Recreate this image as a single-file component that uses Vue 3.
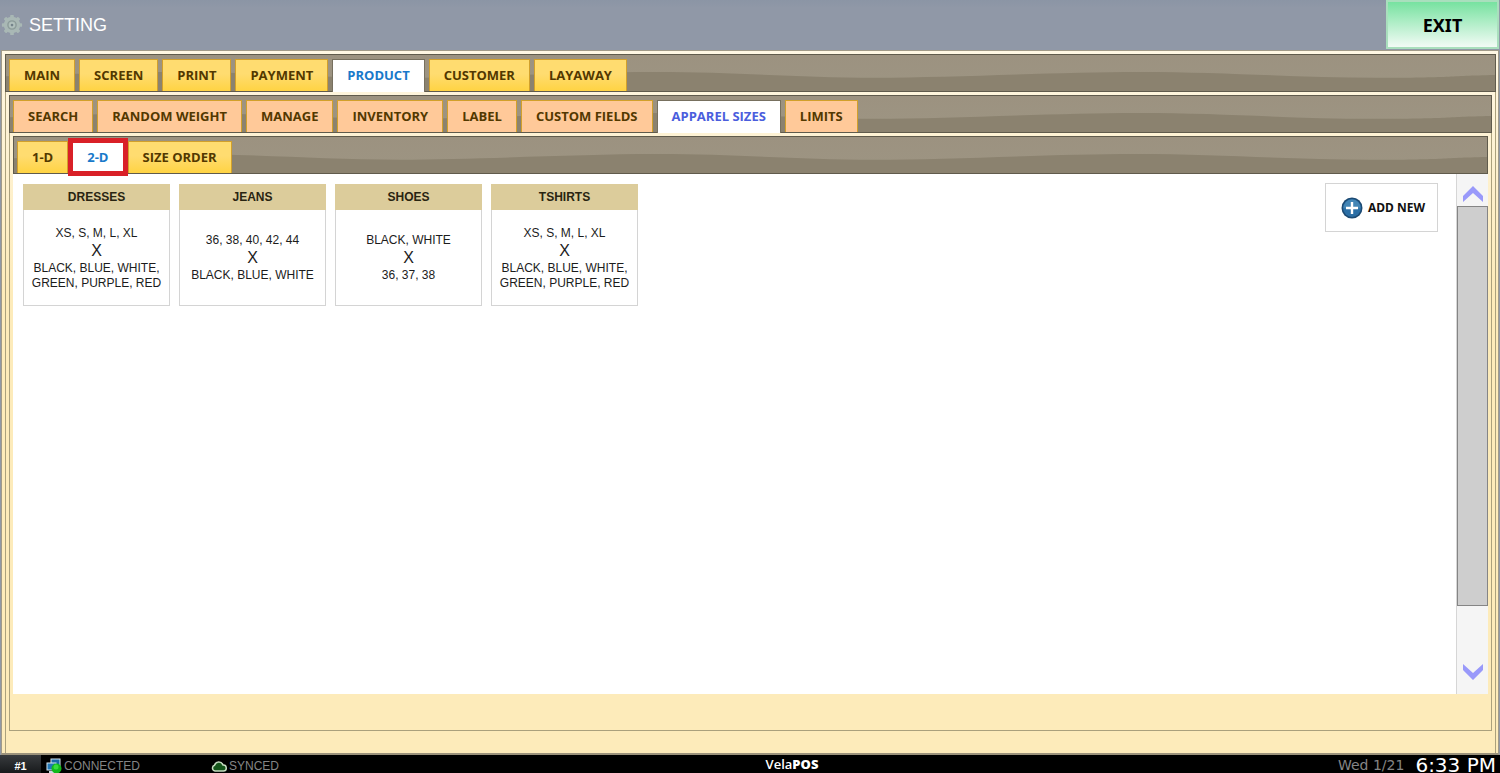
<script setup>
import { ref } from 'vue'

const mainTabs = ['MAIN', 'SCREEN', 'PRINT', 'PAYMENT', 'PRODUCT', 'CUSTOMER', 'LAYAWAY']
const productTabs = ['SEARCH', 'RANDOM WEIGHT', 'MANAGE', 'INVENTORY', 'LABEL', 'CUSTOM FIELDS', 'APPAREL SIZES', 'LIMITS']
const sizeTabs = ['1-D', '2-D', 'SIZE ORDER']

const activeMain = ref('PRODUCT')
const activeProduct = ref('APPAREL SIZES')
const activeSize = ref('2-D')

const cards = [
  { title: 'DRESSES', first: 'XS, S, M, L, XL', second: 'BLACK, BLUE, WHITE, GREEN, PURPLE, RED' },
  { title: 'JEANS', first: '36, 38, 40, 42, 44', second: 'BLACK, BLUE, WHITE' },
  { title: 'SHOES', first: 'BLACK, WHITE', second: '36, 37, 38' },
  { title: 'TSHIRTS', first: 'XS, S, M, L, XL', second: 'BLACK, BLUE, WHITE, GREEN, PURPLE, RED' },
]
const wave = 'M-90 24C0 24 80 18 165 18S310 24 390 24S570 18 650 18S790 24 870 24S1050 18 1135 18S1290 24 1370 24S1440 22 1490 21V40H-90Z'
</script>

<template>
  <div class="app">
    <header class="header">
      <svg class="gear" viewBox="0 0 24 24" aria-hidden="true">
        <g fill="#a9b8b5">
          <rect v-for="n in 4" :key="n" x="10" y="1" width="4" height="22" rx="1" :transform="`rotate(${n * 45} 12 12)`" />
          <circle cx="12" cy="12" r="9" />
        </g>
        <circle cx="12" cy="12" r="4.5" fill="none" stroke="#8c9b99" stroke-width="1.5" />
        <circle cx="12" cy="12" r="3" fill="#b4c2be" />
        <circle cx="12" cy="12" r="1.5" fill="#74838a" />
      </svg>
      <h1 class="title">SETTING</h1>
      <button type="button" class="exit">EXIT</button>
    </header>

    <main class="frame">
      <section class="panel panel-main">
        <nav class="bar">
          <svg class="wave" viewBox="0 0 1490 38" preserveAspectRatio="none" aria-hidden="true"><path :d="wave" /></svg>
          <button v-for="t in mainTabs" :key="t" type="button" class="tab" :class="{ active: t === activeMain }" @click="activeMain = t">{{ t }}</button>
        </nav>
        <section class="panel panel-product">
          <nav class="bar">
            <svg class="wave" viewBox="0 0 1490 38" preserveAspectRatio="none" aria-hidden="true"><path :d="wave" /></svg>
            <button v-for="t in productTabs" :key="t" type="button" class="tab peach" :class="{ active: t === activeProduct }" @click="activeProduct = t">{{ t }}</button>
          </nav>
          <section class="sizes">
            <nav class="bar">
              <svg class="wave" viewBox="0 0 1490 38" preserveAspectRatio="none" aria-hidden="true"><path :d="wave" /></svg>
              <button v-for="t in sizeTabs" :key="t" type="button" class="tab" :class="{ active: t === activeSize, marked: t === '2-D' }" @click="activeSize = t">{{ t }}</button>
            </nav>
            <div class="body">
              <div class="content">
                <div class="cards">
                  <article v-for="c in cards" :key="c.title" class="card">
                    <h2 class="card-title">{{ c.title }}</h2>
                    <div class="card-body">
                      <p>{{ c.first }}</p>
                      <p class="cross">X</p>
                      <p>{{ c.second }}</p>
                    </div>
                  </article>
                </div>
                <button type="button" class="add">
                  <svg class="plus" viewBox="0 0 22 22" aria-hidden="true">
                    <circle cx="11" cy="11" r="10.5" fill="#1c4a73" />
                    <circle cx="11" cy="11" r="9" fill="#2b6ea5" />
                    <path d="M2.5 11a8.5 8.5 0 0 1 17 0q-8 3-17 0" fill="#4385b5" />
                    <path d="M11 5v12M5 11h12" stroke="#fff" stroke-width="2.4" />
                  </svg>
                  <span>ADD NEW</span>
                </button>
              </div>
              <div class="scroll">
                <button type="button" class="arrow" aria-label="Scroll up">
                  <svg viewBox="0 0 20 16" aria-hidden="true"><path d="M0 16V10L10 0l10 10v6L10 7Z" /></svg>
                </button>
                <div class="track"><div class="thumb"></div></div>
                <button type="button" class="arrow down" aria-label="Scroll down">
                  <svg viewBox="0 0 20 16" aria-hidden="true"><path d="M0 0v6l10 10L20 6V0L10 9Z" /></svg>
                </button>
              </div>
            </div>
          </section>
        </section>
      </section>
    </main>

    <footer class="status">
      <span class="station">#1</span>
      <span class="state connected">
        <svg class="icon" viewBox="0 0 16 16" aria-hidden="true">
          <rect x="5" y="1" width="9" height="7" fill="#1768a8" stroke="#d5e6ef" />
          <rect x="1" y="5" width="9" height="7" fill="#2277b5" stroke="#d5e6ef" />
          <path d="M3 14h6" stroke="#c9d8e0" stroke-width="2" />
          <circle cx="10.5" cy="10.5" r="5" fill="#12b91c" />
          <circle cx="10" cy="9" r="2.5" fill="#38dd3d" />
        </svg>
        CONNECTED
      </span>
      <span class="state synced">
        <svg class="icon" viewBox="0 0 16 16" aria-hidden="true">
          <path d="M4 13a3 3 0 0 1-.5-5.800A4.500 4.500 0 0 1 12 7a3 3 0 0 1 .5 6Z" fill="#14551a" stroke="#c5dcc0" stroke-width="1.500" />
        </svg>
        SYNCED
      </span>
      <span class="brand">Vela<b>POS</b></span>
      <span class="date">Wed 1/21</span>
      <span class="clock">6:33 PM</span>
    </footer>
  </div>
</template>

<style>
body {
  margin: 0;
}
</style>

<style scoped>
* {
  box-sizing: border-box;
}
.app {
  display: flex;
  flex-direction: column;
  height: 100vh;
  overflow: hidden;
  background: #9098a6;
  color: #1c1c1c;
  font-family: "Liberation Sans", Arial, sans-serif;
}
button {
  margin: 0;
  cursor: pointer;
}
.header {
  display: flex;
  align-items: center;
  height: 50px;
  flex: none;
  padding: 0 1px;
  background: linear-gradient(#8b95a5, #9098a7 8px);
}
.gear {
  width: 22px;
  height: 22px;
  margin-right: 6px;
}
.title {
  flex: 1;
  margin: 0;
  color: #fff;
  font-size: 18px;
  font-weight: 400;
}
.exit {
  width: 113px;
  height: 49px;
  border: 2px solid #a9dfbd;
  background: linear-gradient(#77e2a0, #f2fbf5);
  color: #000;
  font: 700 18px "Noto Sans", sans-serif;
  align-self: flex-start;
}
.frame {
  display: flex;
  flex: 1;
  flex-direction: column;
  min-height: 0;
  margin: 0 1px;
  padding: 3px 2px 0 3px;
  border: 1px solid #a19a88;
  border-bottom: 2px solid #9b927c;
  background: linear-gradient(#fff7e3, #fdebba 240px);
}
.panel {
  display: flex;
  flex: 1;
  flex-direction: column;
  min-height: 0;
  border: 1px solid #aaa07c;
  border-top: 0;
}
.panel-main {
  border-bottom: 0;
  padding: 0 3px 22px;
}
.panel-product {
  padding: 0 3px 36px;
}
.bar {
  position: relative;
  display: flex;
  align-items: flex-end;
  gap: 4px;
  height: 38px;
  flex: none;
  margin: 0 -4px 3px;
  padding: 4px 3px 0;
  border: 1px solid #605b4c;
  background: linear-gradient(#9c9280, #9d9583);
}
.sizes .bar {
  margin: 0;
}
.wave {
  position: absolute;
  inset: 0;
  width: 100%;
  height: 100%;
  fill: #8b826f;
}
.tab {
  position: relative;
  height: 32px;
  padding: 0 14px 2px;
  border: 1px solid #d2a02b;
  border-bottom: 0;
  background: linear-gradient(#ffdc70 45%, #ffd343);
  color: #523800;
  font: 700 13px/20px "Open Sans", "Segoe UI", sans-serif;
  white-space: nowrap;
}
.peach {
  background: #ffc999;
}
.tab.active {
  height: 33px;
  margin-bottom: -1px;
  border-color: #77705f;
  background: #fff;
  color: #1979ca;
}
.peach.active {
  color: #4a5ddd;
}
.tab.marked {
  z-index: 1;
}
.tab.marked::after {
  content: "";
  position: absolute;
  inset: -4px -5px -2px;
  border: 5px solid #d92027;
}
.sizes {
  display: flex;
  flex: 1;
  flex-direction: column;
  min-height: 0;
}
.body {
  display: flex;
  flex: 1;
  min-height: 0;
  background: #fff;
}
.content {
  display: flex;
  flex: 1;
  align-items: flex-start;
  justify-content: space-between;
  padding: 9px 18px 0 10px;
}
.cards {
  display: flex;
  gap: 9px;
  padding-top: 1px;
}
.card {
  width: 147px;
  height: 122px;
  display: flex;
  flex-direction: column;
  border: 1px solid #d4d4d4;
}
.card-title {
  margin: -1px -1px 0;
  background: #dccc9b;
  color: #292411;
  font-size: 12px;
  line-height: 26px;
  text-align: center;
}
.card-body {
  display: flex;
  flex: 1;
  flex-direction: column;
  justify-content: center;
  padding: 1px 6px 0;
  text-align: center;
  font-size: 12px;
  line-height: 15px;
}
.card-body p {
  margin: 0;
}
.card-body .cross {
  font-size: 16px;
  line-height: 20px;
}
.add {
  display: flex;
  align-items: center;
  justify-content: center;
  gap: 5px;
  width: 113px;
  height: 49px;
  padding: 0 0 0 3px;
  border: 1px solid #d4d4d4;
  background: #fff;
  color: #111;
  font: 700 12px "Noto Sans", sans-serif;
}
.plus {
  width: 22px;
  height: 22px;
}
.scroll {
  display: flex;
  flex-direction: column;
  width: 32px;
  border-left: 1px solid #d6d6d6;
  background: #f5f5f5;
}
.arrow {
  display: flex;
  align-items: center;
  justify-content: center;
  height: 32px;
  padding: 8px 0 0;
  border: 0;
  background: none;
}
.arrow.down {
  height: 44px;
  padding: 0;
}
.arrow svg {
  width: 20px;
  height: 16px;
  fill: #9999fa;
}
.track {
  flex: 1;
}
.thumb {
  height: 90%;
  border: 1px solid #858585;
  background: #cecece;
}
.status {
  position: relative;
  display: flex;
  align-items: center;
  height: 18px;
  flex: none;
  background: #000;
  color: #858585;
  font-size: 12px;
  line-height: 18px;
}
.station {
  width: 41px;
  height: 18px;
  background: linear-gradient(#383b3e, #181a1c);
  color: #fff;
  font-size: 11px;
  font-weight: 700;
  line-height: 22px;
  text-align: center;
}
.state {
  display: flex;
  align-items: center;
  gap: 2px;
  padding-top: 4px;
}
.connected {
  width: 170px;
  padding-left: 5px;
}
.icon {
  width: 16px;
  height: 16px;
}
.brand {
  position: absolute;
  left: 0;
  right: 0;
  padding-left: 84px;
  color: #fff;
  font-family: "Open Sans", sans-serif;
  font-size: 13px;
  font-weight: 600;
  text-align: center;
}
.date,
.clock {
  font-family: "DejaVu Sans", sans-serif;
  line-height: 16px;
  padding-top: 2px;
}
.date {
  margin-left: auto;
  font-size: 14px;
}
.clock {
  padding-left: 11px;
  padding-right: 4px;
  color: #fff;
  font-size: 20px;
}
</style>
